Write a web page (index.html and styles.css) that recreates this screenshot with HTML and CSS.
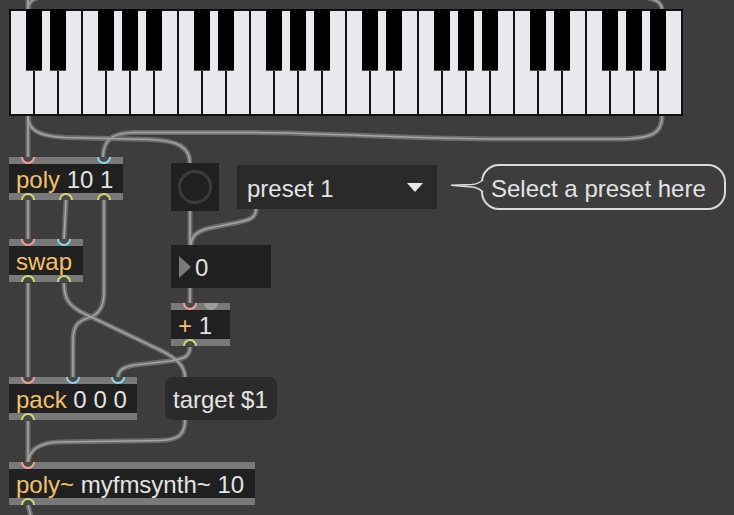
FILE: index.html
```html
<!DOCTYPE html>
<html>
<head>
<meta charset="utf-8">
<link rel="stylesheet" href="styles.css">
</head>
<body>
<div class="patcher">
  <svg class="cords" width="734" height="515" viewBox="0 0 734 515">
    <defs>
      <path id="c1" d="M28 -5 L28 10"/>
      <path id="c2" d="M37 -2 C31 0 28 3 28 10"/>
      <path id="c3" d="M648 -2 C657 0 662 3 662 10"/>
      <path id="c4" d="M28 116 L28 158"/>
      <path id="c5" d="M28 116 C28 130 38 136 65 137.5 L150 139.5 C178 140.5 190 147 190 164"/>
      <path id="c6" d="M662 116 C662 134 652 139 615 139 L500 139 C420 139 330 133 250 132.5 L135 132.5 C112 132.5 103 140 103 158"/>
      <path id="c7" d="M190 211 L190 246"/>
      <path id="c8" d="M256 209 C256 218 250 220 235 223 L210 228 C197 231 191 236 191 246"/>
      <path id="c9" d="M190 288 L190 304"/>
      <path id="c10" d="M190 347 C190 357 183 359 170 361 L135 365 C123 367 118 370 118 378"/>
      <path id="c11" d="M28 200 L28 240"/>
      <path id="c12" d="M66 200 L64 240"/>
      <path id="c13" d="M104 200 L104 293 C104 310 95 316 88 318 C78 321 73 326 73 340 L73 378"/>
      <path id="c14" d="M64 283 C64 298 68 306 85 314 L160 350 C178 359 185 366 185 378"/>
      <path id="c15" d="M28 283 L28 378"/>
      <path id="c16" d="M28 421 L28 463"/>
      <path id="c17" d="M185 420 C185 435 178 440 160 440.5 L60 442 C38 442.5 29 450 28 463"/>
      <path id="c18" d="M28 505 L32 520"/>
    </defs>
    <g class="cord-outer">
      <use href="#c1"/><use href="#c2"/><use href="#c3"/><use href="#c4"/><use href="#c5"/><use href="#c6"/>
      <use href="#c7"/><use href="#c8"/><use href="#c9"/><use href="#c10"/><use href="#c11"/><use href="#c12"/>
      <use href="#c13"/><use href="#c14"/><use href="#c15"/><use href="#c16"/><use href="#c17"/><use href="#c18"/>
    </g>
    <g class="cord-inner">
      <use href="#c1"/><use href="#c2"/><use href="#c3"/><use href="#c4"/><use href="#c5"/><use href="#c6"/>
      <use href="#c7"/><use href="#c8"/><use href="#c9"/><use href="#c10"/><use href="#c11"/><use href="#c12"/>
      <use href="#c13"/><use href="#c14"/><use href="#c15"/><use href="#c16"/><use href="#c17"/><use href="#c18"/>
    </g>
  </svg>

  <div class="kslider">
    <div class="octave">
      <div class="wk"></div><div class="wk"></div><div class="wk"></div><div class="wk"></div><div class="wk"></div><div class="wk"></div><div class="wk"></div>
      <div class="bk cs"></div><div class="bk ds"></div><div class="bk fs"></div><div class="bk gs"></div><div class="bk as"></div>
    </div>
    <div class="octave">
      <div class="wk"></div><div class="wk"></div><div class="wk"></div><div class="wk"></div><div class="wk"></div><div class="wk"></div><div class="wk"></div>
      <div class="bk cs"></div><div class="bk ds"></div><div class="bk fs"></div><div class="bk gs"></div><div class="bk as"></div>
    </div>
    <div class="octave">
      <div class="wk"></div><div class="wk"></div><div class="wk"></div><div class="wk"></div><div class="wk"></div><div class="wk"></div><div class="wk"></div>
      <div class="bk cs"></div><div class="bk ds"></div><div class="bk fs"></div><div class="bk gs"></div><div class="bk as"></div>
    </div>
    <div class="octave">
      <div class="wk"></div><div class="wk"></div><div class="wk"></div><div class="wk"></div><div class="wk"></div><div class="wk"></div><div class="wk"></div>
      <div class="bk cs"></div><div class="bk ds"></div><div class="bk fs"></div><div class="bk gs"></div><div class="bk as"></div>
    </div>
  </div>

  <div class="obj o-poly">
    <div class="bar top"><span class="port in hot"></span><span class="port in cold"></span></div>
    <div class="body"><span class="cls">poly</span> 10 1</div>
    <div class="bar bottom"><span class="port out"></span><span class="port out"></span><span class="port out"></span></div>
  </div>

  <div class="obj o-swap">
    <div class="bar top"><span class="port in hot"></span><span class="port in cold"></span></div>
    <div class="body"><span class="cls">swap</span></div>
    <div class="bar bottom"><span class="port out"></span><span class="port out"></span></div>
  </div>

  <div class="obj o-pack">
    <div class="bar top"><span class="port in hot"></span><span class="port in cold"></span><span class="port in cold"></span></div>
    <div class="body"><span class="cls">pack</span> 0 0 0</div>
    <div class="bar bottom"><span class="port out"></span></div>
  </div>

  <div class="obj o-plus">
    <div class="bar top"><span class="port in hot"></span><span class="port idle"></span></div>
    <div class="body"><span class="cls">+</span> 1</div>
    <div class="bar bottom"><span class="port out"></span></div>
  </div>

  <div class="obj o-polytilde">
    <div class="bar top"><span class="port in hot"></span></div>
    <div class="body"><span class="cls">poly~</span> myfmsynth~ 10</div>
    <div class="bar bottom"><span class="port out"></span></div>
  </div>

  <div class="button"><div class="ring"></div></div>

  <div class="umenu"><span class="label">preset 1</span><span class="caret"></span></div>

  <div class="number"><span class="tri"></span><span class="label">0</span></div>

  <div class="msg">target $1</div>

  <div class="comment">Select a preset here</div>
  <svg class="tail" width="40" height="24" viewBox="445 174 40 24">
    <path class="tail-fill" d="M451 185.2 L472 184.5 Q478 184 483 180 L483 192 Q478 187.5 472 187 L451 186.2 Z"/>
    <path class="tail-line" d="M483 180 Q478 184 472 184.5 L451 185.2 L472 187 Q478 187.5 483 192"/>
  </svg>
</div>
</body>
</html>
```

FILE: styles.css
```css
* { box-sizing: border-box; }

body {
  margin: 0;
  background: #3d3d3d;
  font-family: "Liberation Sans", Arial, sans-serif;
}

.patcher {
  position: relative;
  width: 734px;
  height: 515px;
  overflow: hidden;
  background: #3d3d3d;
}

.cords {
  position: absolute;
  left: 0;
  top: 0;
}

.cord-outer use {
  fill: none;
  stroke: #6d6d6d;
  stroke-width: 5;
}

.cord-inner use {
  fill: none;
  stroke: #a3a3a3;
  stroke-width: 1.6;
}

/* keyboard */
.kslider {
  position: absolute;
  left: 9px;
  top: 9px;
  height: 107px;
  display: flex;
  padding: 2px 0 2px 2px;
  background: #111;
}

.octave {
  position: relative;
  display: flex;
}

.wk {
  width: 22px;
  margin-right: 2px;
  background: #e9e8ed;
}

.octave:last-child .wk:last-of-type {
  width: 21px;
}

.bk {
  position: absolute;
  top: -2px;
  width: 16px;
  height: 62px;
  background: #000;
  border-bottom: 1px solid #4c4c4c;
}

.cs { left: 15px; }
.ds { left: 39px; }
.fs { left: 87px; }
.gs { left: 111px; }
.as { left: 135px; }

/* object boxes */
.obj {
  position: absolute;
  display: flex;
  flex-direction: column;
  color: #e3e3e3;
  font-size: 24px;
}

.bar {
  height: 7px;
  background: #797979;
  display: flex;
  justify-content: space-between;
  padding: 0 12px;
}

.bar.top { align-items: flex-start; }
.bar.bottom { align-items: flex-end; }

.body {
  height: 29px;
  line-height: 31px;
  background: #202020;
  padding: 0 7px;
  white-space: nowrap;
  overflow: hidden;
}

.cls { color: #f3c069; }

.port {
  width: 14px;
  height: 7px;
  border: 2px solid #d5db78;
  background: #4a4a4a;
}

.in {
  border-top: 0;
  border-radius: 0 0 7px 7px;
}

.out {
  border-bottom: 0;
  border-radius: 7px 7px 0 0;
  border-color: #d3d975;
}

.hot { border-color: #efa294; }
.cold { border-color: #8bd4e9; }

.idle {
  border: 0;
  border-radius: 0 0 7px 7px;
  background: #9c9c9c;
}

.o-poly { left: 9px; top: 157px; width: 114px; }
.o-swap { left: 9px; top: 239px; width: 74px; }
.o-pack { left: 9px; top: 377px; width: 128px; }
.o-plus { left: 171px; top: 303px; width: 59px; }
.o-polytilde { left: 9px; top: 462px; width: 246px; }

/* UI objects */
.button {
  position: absolute;
  left: 171px;
  top: 163px;
  width: 48px;
  height: 48px;
  background: #202020;
  display: flex;
  align-items: center;
  justify-content: center;
}

.ring {
  width: 34px;
  height: 34px;
  border: 3.5px solid #3b3b3b;
  border-radius: 50%;
}

.umenu {
  position: absolute;
  left: 237px;
  top: 165px;
  width: 200px;
  height: 44px;
  background: #2a2a2a;
  color: #e3e3e3;
  font-size: 24px;
  display: flex;
  align-items: center;
  justify-content: space-between;
  padding: 0 14px 0 10px;
}

.umenu .label {
  position: relative;
  top: 2px;
}

.caret {
  width: 0;
  height: 0;
  border-left: 8px solid transparent;
  border-right: 8px solid transparent;
  border-top: 9px solid #e8e8e8;
}

.number {
  position: absolute;
  left: 171px;
  top: 245px;
  width: 100px;
  height: 43px;
  background: #202020;
  color: #e3e3e3;
  font-size: 24px;
  display: flex;
  align-items: center;
  gap: 4px;
  padding: 0 0 0 8px;
}

.number .label {
  position: relative;
  top: 1px;
}

.tri {
  width: 0;
  height: 0;
  border-left: 12.5px solid #7a7a7a;
  border-top: 11px solid transparent;
  border-bottom: 11px solid transparent;
}

.msg {
  position: absolute;
  left: 165px;
  top: 377px;
  width: 112px;
  height: 43px;
  background: #2b2b2b;
  border-radius: 8px;
  color: #e3e3e3;
  font-size: 24px;
  line-height: 46px;
  padding-left: 8px;
  white-space: nowrap;
}

.comment {
  position: absolute;
  left: 481px;
  top: 164px;
  width: 245px;
  height: 46px;
  border: 2px solid #dadada;
  border-radius: 18px;
  color: #e3e3e3;
  font-size: 24px;
  line-height: 45px;
  padding-left: 8px;
  white-space: nowrap;
}

.tail {
  position: absolute;
  left: 445px;
  top: 174px;
}

.tail-fill { fill: #3d3d3d; }

.tail-line {
  fill: none;
  stroke: #dadada;
  stroke-width: 1.5;
}
```
